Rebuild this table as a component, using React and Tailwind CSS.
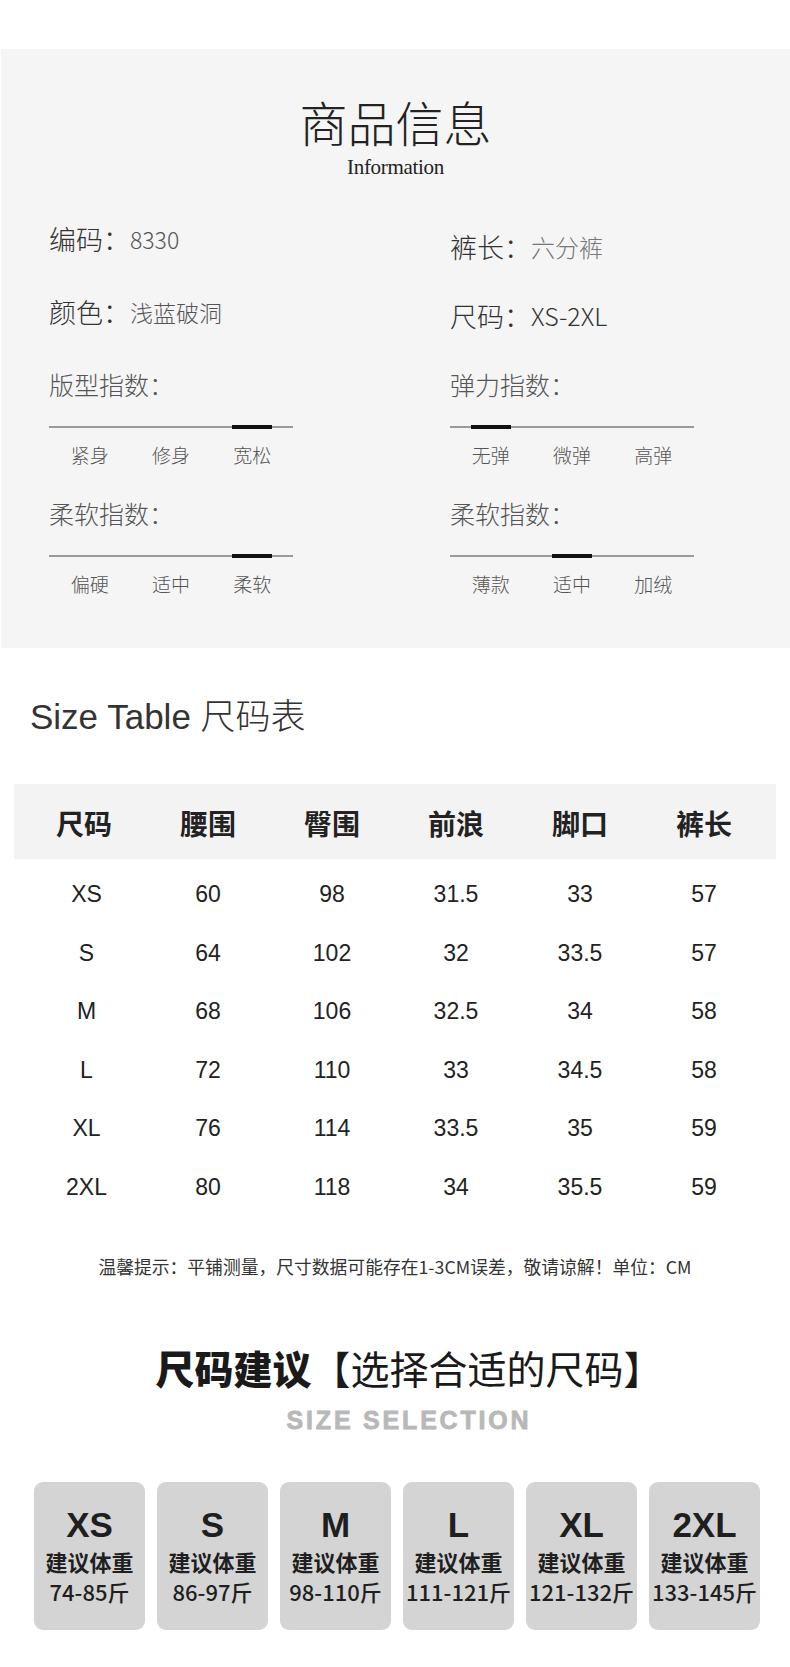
import React from "react";

const cjk = "font-['Noto_Sans_CJK_SC','Liberation_Sans',sans-serif]";
const latin = "font-['Liberation_Sans','Noto_Sans_CJK_SC',sans-serif]";

const sizeRows = [
  ["XS", "60", "98", "31.5", "33", "57"],
  ["S", "64", "102", "32", "33.5", "57"],
  ["M", "68", "106", "32.5", "34", "58"],
  ["L", "72", "110", "33", "34.5", "58"],
  ["XL", "76", "114", "33.5", "35", "59"],
  ["2XL", "80", "118", "34", "35.5", "59"],
];

const cards = [
  ["XS", "74-85斤"],
  ["S", "86-97斤"],
  ["M", "98-110斤"],
  ["L", "111-121斤"],
  ["XL", "121-132斤"],
  ["2XL", "133-145斤"],
];

// three-step index bar with the active step marked in black
const Scale = ({ labels, active }) => (
  <div className="w-[244px]">
    <div className="mt-[17px] grid grid-cols-3 border-t-2 border-[#9a9a9a]">
      {labels.map((l, i) => (
        <div key={l} className="flex justify-center">
          {i === active && <div className="-mt-[3px] h-[4px] w-[40px] bg-[#111]" />}
        </div>
      ))}
    </div>
    <div className="mt-[14px] grid grid-cols-3 text-center text-[19px] leading-[24px] font-light text-[#555]">
      {labels.map((l) => (
        <span key={l}>{l}</span>
      ))}
    </div>
  </div>
);

const Field = ({ label, value, valueClass, className }) => (
  <div className={`flex h-[48px] items-center ${className || ""}`}>
    <span className="text-[27px] font-light text-[#333]">{label}</span>
    <span className={valueClass}>{value}</span>
  </div>
);

const IndexTitle = ({ children, className }) => (
  <div className={`flex h-[48px] items-center text-[25px] font-light text-[#555] ${className || ""}`}>
    {children}
  </div>
);

export default function App() {
  return (
    <div className={`w-[790px] bg-white pt-[49px] pb-[36px] ${cjk}`}>
      {/* product info panel */}
      <div className="ml-[1px] h-[599px] bg-[#f5f5f5] pt-[48px]">
        <h1 className="text-center text-[48px] leading-[48px] font-extralight text-[#222]">
          商品信息
        </h1>
        <p className="mt-[10px] text-center font-['Liberation_Serif',serif] text-[21px] leading-[24px] tracking-[-0.3px] text-[#222]">
          Information
        </p>

        <div className="mt-[36px] grid grid-cols-[401px_1fr] pl-[48px]">
          <div className="flex flex-col">
            <Field label="编码：" value="8330" valueClass="text-[23px] font-light text-[#555]" />
            <Field
              className="mt-[25px]"
              label="颜色："
              value="浅蓝破洞"
              valueClass="text-[23px] font-light text-[#555]"
            />
            <IndexTitle className="mt-[25px]">版型指数：</IndexTitle>
            <Scale labels={["紧身", "修身", "宽松"]} active={2} />
            <IndexTitle className="mt-[23px]">柔软指数：</IndexTitle>
            <Scale labels={["偏硬", "适中", "柔软"]} active={2} />
          </div>

          <div className="flex flex-col pt-[8px]">
            <Field label="裤长：" value="六分裤" valueClass="text-[24px] font-light text-[#777]" />
            <Field
              className="mt-[21px]"
              label="尺码："
              value="XS-2XL"
              valueClass="text-[25px] font-light text-[#333]"
            />
            <IndexTitle className="mt-[21px]">弹力指数：</IndexTitle>
            <Scale labels={["无弹", "微弹", "高弹"]} active={0} />
            <IndexTitle className="mt-[23px]">柔软指数：</IndexTitle>
            <Scale labels={["薄款", "适中", "加绒"]} active={1} />
          </div>
        </div>
      </div>

      {/* size table */}
      <h2 className="mt-[46px] pl-[30px] text-[35px] leading-[40px] text-[#333]">
        <span className={latin}>Size Table </span>
        <span className="font-light">尺码表</span>
      </h2>

      <div className="mx-[14px] mt-[47px]">
        <div className="grid h-[75px] grid-cols-[repeat(6,124px)] items-center bg-[#f3f3f3] pl-[8px] pt-[3px] text-center text-[28px] font-bold text-[#222]">
          {["尺码", "腰围", "臀围", "前浪", "脚口", "裤长"].map((h) => (
            <span key={h}>{h}</span>
          ))}
        </div>
        <div className={`pt-[6px] pl-[8px] ${latin}`}>
          {sizeRows.map((row) => (
            <div
              key={row[0]}
              className="grid h-[58.5px] grid-cols-[repeat(6,124px)] items-center text-center text-[23px] text-[#222]"
            >
              {row.map((v, i) => (
                <span key={i} className={i === 0 ? "pl-[5px]" : ""}>
                  {v}
                </span>
              ))}
            </div>
          ))}
        </div>
      </div>

      <p className="mt-[38px] text-center text-[17.8px] leading-[24px] text-[#333]">
        温馨提示：平铺测量，尺寸数据可能存在1-3CM误差，敬请谅解！单位：CM
      </p>

      {/* size suggestion */}
      <h2 className="mt-[65px] pl-[28px] text-center text-[39px] leading-[48px] text-[#1a1a1a]">
        <span className="font-black">尺码建议</span>
        <span>【选择合适的尺码】</span>
      </h2>
      <p
        className={`mt-[15px] pl-[28px] text-center text-[25px] leading-[28px] font-black tracking-[2.8px] text-[#b8b8b8] [-webkit-text-stroke:0.8px_#b8b8b8] ${latin}`}
      >
        SIZE SELECTION
      </p>

      <div className="mt-[48px] flex gap-[12px] pl-[34px]">
        {cards.map(([size, range]) => (
          <div
            key={size}
            className="flex h-[148px] w-[111px] flex-col items-center rounded-[9px] bg-[#d4d4d4] pt-[24px] text-[#1f1f1f]"
          >
            <span className={`text-[35px] leading-[38px] font-bold ${latin}`}>{size}</span>
            <span className="mt-[2px] text-[22px] leading-[30px] font-bold">建议体重</span>
            <span className="text-[22px] leading-[30px] font-medium">{range}</span>
          </div>
        ))}
      </div>
    </div>
  );
}
